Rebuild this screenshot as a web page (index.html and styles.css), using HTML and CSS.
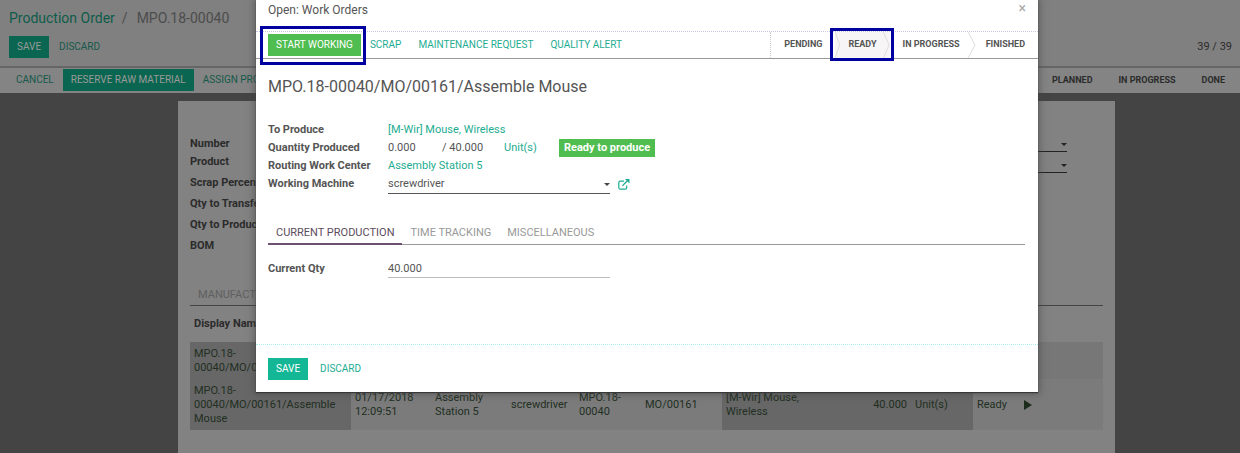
FILE: index.html
```html
<!DOCTYPE html>
<html lang="en">
<head>
<meta charset="utf-8">
<title>Production Order</title>
<link rel="stylesheet" href="styles.css">
</head>
<body>
<div class="page">
  <header class="control-panel">
    <h1 class="breadcrumb"><a href="#">Production Order</a><span class="slash">/</span><span class="current">MPO.18-00040</span></h1>
    <div class="panel-row">
      <div class="panel-buttons">
        <button class="btn btn-dim">Save</button>
        <button class="btn btn-dimlink">Discard</button>
      </div>
      <span class="pager">39 / 39</span>
    </div>
  </header>
  <div class="page-status">
    <div class="page-actions">
      <button class="btn btn-dimlink">Cancel</button>
      <button class="btn btn-dim">Reserve Raw Material</button>
      <button class="btn btn-dimlink">Assign Products</button>
    </div>
    <ul class="page-steps">
      <li>Planned</li>
      <li>In Progress</li>
      <li>Done</li>
    </ul>
  </div>
  <main class="sheet">
    <div class="sheet-fields">
      <div class="sheet-row short"><span>Number</span><span class="sheet-select"></span></div>
      <div class="sheet-row"><span>Product</span><span class="sheet-select"></span></div>
      <div class="sheet-row"><span>Scrap Percentage</span></div>
      <div class="sheet-row"><span>Qty to Transfer</span></div>
      <div class="sheet-row"><span>Qty to Produce</span></div>
      <div class="sheet-row"><span>BOM</span></div>
    </div>
    <div class="sheet-tab">Manufacturing</div>
    <table class="orders">
      <colgroup>
        <col class="c-name"><col class="c-date"><col class="c-station"><col class="c-machine"><col class="c-order"><col class="c-mo"><col class="c-product"><col class="c-qty"><col class="c-unit"><col class="c-state"><col>
      </colgroup>
      <thead>
        <tr><th colspan="11">Display Name</th></tr>
      </thead>
      <tbody>
        <tr>
          <td class="shade">MPO.18-<br>00040/MO/00161</td>
          <td colspan="10"></td>
        </tr>
        <tr>
          <td class="shade">MPO.18-<br>00040/MO/00161/Assemble<br>Mouse</td>
          <td class="light">01/17/2018<br>12:09:51</td>
          <td class="light">Assembly<br>Station 5</td>
          <td class="light">screwdriver</td>
          <td class="light">MPO.18-<br>00040</td>
          <td class="light">MO/00161</td>
          <td class="shade">[M-Wir] Mouse,<br>Wireless</td>
          <td class="shade num">40.000</td>
          <td class="shade">Unit(s)</td>
          <td class="light">Ready</td>
          <td class="light"><svg class="play" viewBox="0 0 8 10" aria-hidden="true"><path d="M0 0L8 5L0 10Z"/></svg></td>
        </tr>
      </tbody>
    </table>
  </main>
</div>

<section class="modal" role="dialog" aria-labelledby="modal-title">
  <header class="modal-head">
    <h2 id="modal-title">Open: Work Orders</h2>
    <button class="close" aria-label="Close">×</button>
  </header>
  <div class="modal-status">
    <div class="modal-actions">
      <span class="marked marked-button"><button class="btn btn-start">Start Working</button></span>
      <button class="btn btn-link">Scrap</button>
      <button class="btn btn-link">Maintenance Request</button>
      <button class="btn btn-link">Quality Alert</button>
    </div>
    <ul class="steps">
      <li>Pending</li>
      <li class="active marked marked-step">Ready
        <svg class="ready-arrows" viewBox="0 0 56 26" preserveAspectRatio="none" aria-hidden="true"><path d="M0 0L5 13L0 26M50 0L56 13L50 26"/></svg>
      </li>
      <li>In Progress</li>
      <li>Finished
        <svg class="arrow" viewBox="0 0 8 26" aria-hidden="true"><path d="M0 0L7 13L0 26"/></svg>
      </li>
    </ul>
  </div>
  <div class="modal-body">
    <h3 class="order-name">MPO.18-00040/MO/00161/Assemble Mouse</h3>
    <div class="fields">
      <span class="label">To Produce</span>
      <a href="#">[M-Wir] Mouse, Wireless</a>
      <span class="label">Quantity Produced</span>
      <div class="quantity">
        <span class="made">0.000</span>
        <span class="total">/ 40.000</span>
        <a class="unit" href="#">Unit(s)</a>
        <span class="badge">Ready to produce</span>
      </div>
      <span class="label">Routing Work Center</span>
      <a href="#">Assembly Station 5</a>
      <label class="label" for="machine">Working Machine</label>
      <div class="machine-row">
        <span class="select-wrap"><select id="machine"><option>screwdriver</option></select></span>
        <a class="external" href="#" aria-label="Open machine">
          <svg viewBox="0 0 12 11" aria-hidden="true"><path class="frame" d="M6 2.2H2.3Q.8 2.2 .8 3.7V8.7Q.8 10.2 2.3 10.2H7.2Q8.7 10.2 8.7 8.7V6.6"/><path class="frame" d="M4.4 6.8L9.5 1.8"/><path class="tip" d="M7 0H11.5V4.5L10 3.1L8.5 1.5Z"/></svg>
        </a>
      </div>
    </div>
    <div class="tabs" role="tablist">
      <button class="tab selected" role="tab" aria-selected="true">Current Production</button>
      <button class="tab" role="tab">Time Tracking</button>
      <button class="tab" role="tab">Miscellaneous</button>
    </div>
    <div class="fields">
      <label class="label" for="qty">Current Qty</label>
      <div class="machine-row"><input id="qty" type="text" value="40.000"></div>
    </div>
  </div>
  <footer class="modal-foot">
    <button class="btn btn-save">Save</button>
    <button class="btn btn-link">Discard</button>
  </footer>
</section>
</body>
</html>
```
FILE: styles.css
```css
* { box-sizing: border-box; }
body {
  margin: 0;
  font: 11px/18px Roboto, "Liberation Sans", sans-serif;
  color: #555;
  background: #444;
}
h1, h2, h3, ul { margin: 0; padding: 0; font-weight: 400; }
ul { list-style: none; display: flex; }
a { color: #1dac92; text-decoration: none; }
button, input, select { font: inherit; color: inherit; border: 0; border-radius: 0; background: none; padding: 0; }
.btn { height: 22px; padding: 0 8px; font-size: 10px; text-transform: uppercase; white-space: nowrap; }

/* Dimmed page behind the dialog */
.page { height: 100vh; overflow: hidden; color: #2b2b2b; }
.control-panel { padding: 8px 8px 8px 9px; background: #808080; border-bottom: 2px solid #666; }
.breadcrumb { font-size: 14px; line-height: 20px; color: #4c4c4c; }
.breadcrumb a { color: #0d5c4a; }
.slash { margin: 0 9px 0 7px; }
.panel-row { display: flex; justify-content: space-between; padding-top: 8px; }
.panel-buttons { display: flex; gap: 2px; }
.btn-dim { background: #0a6650; color: #9a9a9a; }
.btn-dimlink { color: #15594a; }
.pager { line-height: 22px; }
.page-status { display: flex; justify-content: space-between; padding: 1px 15px 2px 8px; background: #848484; }
.page-actions { display: flex; gap: 1px; }
.page-steps { gap: 26px; font-size: 9px; font-weight: 700; line-height: 22px; text-transform: uppercase; }
.sheet { margin: 8px 125px 0 178px; min-height: 400px; padding: 34px 12px 0; background: #828282; }
.sheet-fields { padding-right: 36px; font-weight: 700; }
.sheet-row { display: flex; justify-content: space-between; height: 21px; }
.sheet-row.short { height: 18px; }
.sheet-select { position: relative; width: 50%; height: calc(100% - 1px); border-bottom: 1px solid #222; }
.sheet-select::after { content: ""; position: absolute; right: 0; bottom: 5px; border: 3px solid transparent; border-top-color: #222; border-bottom: 0; }
.sheet-tab { margin-top: 27px; padding: 0 8px; line-height: 20px; font-size: 11px; text-transform: uppercase; color: #606060; border-bottom: 1px solid #444; }
.orders { width: 100%; table-layout: fixed; border-collapse: collapse; line-height: 14px; }
.orders th { height: 36px; text-align: left; padding: 0 4px; font-weight: 700; }
.orders td { padding: 5px 4px 4px; background: #777; color: #222f22; white-space: nowrap; }
.orders td.shade { background: #676767; }
.orders td.light { background: #7b7b7b; }
.orders td.num { text-align: right; }
.c-name { width: 161px; } .c-date { width: 80px; } .c-station { width: 76px; }
.c-machine { width: 68px; } .c-order { width: 66px; } .c-mo { width: 81px; }
.c-product { width: 117px; } .c-qty { width: 72px; } .c-unit { width: 62px; } .c-state { width: 47px; }
.play { display: block; width: 8px; height: 10px; fill: #1c2c1c; }

/* Dialog */
.modal { position: absolute; top: 0; left: 256px; right: 202px; background: #fff; box-shadow: 0 0 7px 2px #4448, 0 1px 1px #333; }
.modal-head { display: flex; justify-content: space-between; height: 31px; padding: 0 12px; }
.modal-head h2 { font-size: 12px; line-height: 20px; }
.close { font-size: 14px; line-height: 16px; height: 16px; color: #aaa; }
.modal-status { display: flex; justify-content: space-between; border-top: 1px dotted #c8c8e8; border-bottom: 1px solid #999; height: 28px; }
.modal-actions { display: flex; gap: 1px; padding: 2px 12px; }
.marked { position: relative; }
.marked::after { content: ""; position: absolute; border: 3px solid #0000a0; }
.marked-button::after { inset: -8px -5px -9px -8px; }
.marked-step::after { inset: -4px -4px -3px -5px; }
.btn-start { background: #4fbd50; color: #fff; }
.btn-link { color: #1dac92; }
.steps { font-size: 9px; font-weight: 700; line-height: 25px; text-transform: uppercase; border-left: 1px dotted #ccc; }
.steps li { position: relative; padding: 0 13px; }
.steps .active { background: #f7f5f6; }
.ready-arrows, .arrow { position: absolute; top: 0; height: 26px; fill: none; stroke: #ddd; }
.ready-arrows { left: 0; width: 100%; }
.arrow { left: -5px; width: 8px; }
.modal-body { padding: 17px 13px 0 12px; }
.order-name { font-size: 16px; line-height: 21px; margin-bottom: 24px; }
.fields { display: grid; grid-template-columns: 120px 1fr; }
.label { font-weight: 700; }
.quantity, .machine-row { display: flex; align-items: center; }
.made { width: 54px; }
.total { width: 62px; }
.unit { width: 55px; }
.badge { padding: 0 5px; color: #fff; background: #4fbd50; font-weight: 700; }
.machine-row { gap: 8px; }
.select-wrap { position: relative; width: 222px; border-bottom: 1px solid #555; }
.select-wrap::after { content: ""; position: absolute; right: 0; top: 8px; border: 3px solid transparent; border-top-color: #444; border-bottom: 0; }
select { display: block; appearance: none; width: 100%; height: 18px; }
.external svg { display: block; width: 12px; height: 11px; }
.frame { fill: none; stroke: #1dac92; stroke-width: 1.2; }
.tip { fill: #1dac92; }
.tabs { display: flex; margin: 28px 0 15px; border-bottom: 1px solid #999; }
.tab { height: 22px; padding: 0 8px; color: #999; text-transform: uppercase; white-space: nowrap; }
.tab.selected { color: #5c4c5c; height: 23px; margin-bottom: -1px; border-bottom: 2px solid #6c5270; }
input { width: 222px; height: 18px; border-bottom: 1px solid #bbb; }
.modal-foot { display: flex; gap: 4px; margin-top: 66px; padding: 13px 12px 12px; border-top: 1px dotted #aee; }
.btn-save { background: #14b795; color: #fff; }
```
